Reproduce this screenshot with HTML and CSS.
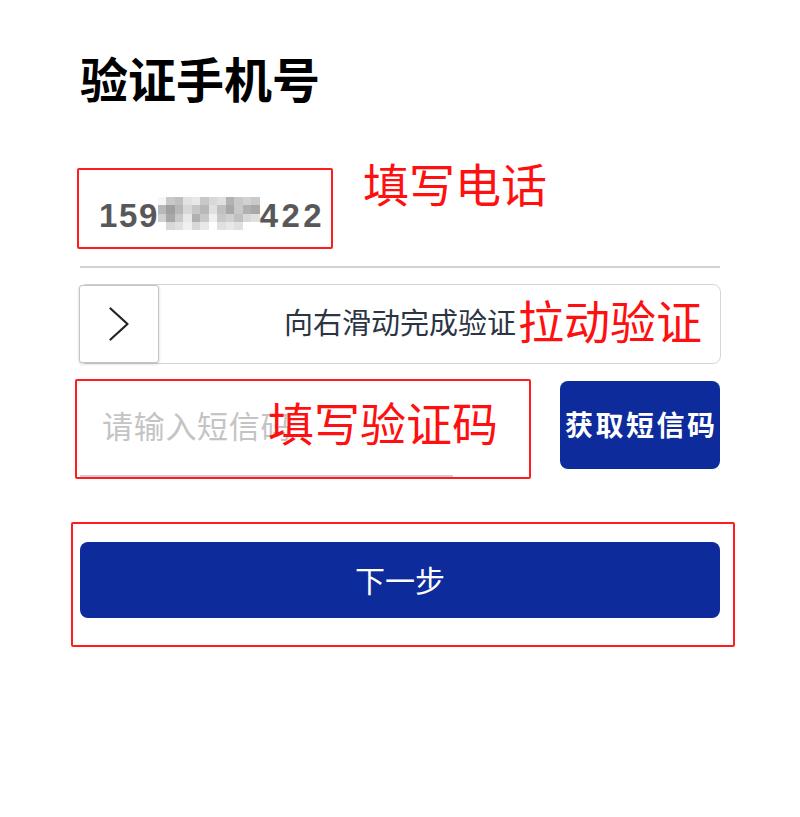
FILE: index.html
```html
<!DOCTYPE html>
<html lang="zh-CN">
<head>
<meta charset="utf-8">
<title>验证手机号</title>
<link rel="stylesheet" href="styles.css">
</head>
<body>
<main class="page">
  <h1 class="title">验证手机号</h1>

  <div class="phone">
    <span class="digits">159</span>
    <div class="mosaic" aria-label="已打码">
      <i style="background:#f6f6f6"></i><i style="background:#c8c8c8"></i><i style="background:#c0c0c0"></i><i style="background:#e2e2e2"></i><i style="background:#e8e8e8"></i><i style="background:#c8c8c8"></i><i style="background:#d8d8d8"></i><i style="background:#e0e0e0"></i><i style="background:#b2b2b2"></i><i style="background:#c8c8c8"></i><i style="background:#d2d2d2"></i><i style="background:#cacaca"></i>
      <i style="background:#b8b8b8"></i><i style="background:#a0a0a0"></i><i style="background:#b8b8b8"></i><i style="background:#d8d8d8"></i><i style="background:#c6c6c6"></i><i style="background:#b8b8b8"></i><i style="background:#e0e0e0"></i><i style="background:#c0c0c0"></i><i style="background:#a8a8a8"></i><i style="background:#c8c8c8"></i><i style="background:#b0b0b0"></i><i style="background:#a8a8a8"></i>
      <i style="background:#d0d0d0"></i><i style="background:#a8a8a8"></i><i style="background:#c8c8c8"></i><i style="background:#e8e8e8"></i><i style="background:#b0b0b0"></i><i style="background:#c8c8c8"></i><i style="background:#f0f0f0"></i><i style="background:#c8c8c8"></i><i style="background:#d0d0d0"></i><i style="background:#c0c0c0"></i><i style="background:#d8d8d8"></i><i style="background:#e0e0e0"></i>
      <i style="background:#fff"></i><i style="background:#d8d8d8"></i><i style="background:#e0e0e0"></i><i style="background:#f0f0f0"></i><i style="background:#d8d8d8"></i><i style="background:#e8e8e8"></i><i style="background:#fff"></i><i style="background:#e0e0e0"></i><i style="background:#e8e8e8"></i><i style="background:#e0e0e0"></i><i style="background:#fff"></i><i style="background:#fff"></i>
    </div>
    <span class="digits digits-tail">422</span>
    <div class="mark mark-phone"></div>
    <div class="note note-phone">填写电话</div>
  </div>

  <div class="slider">
    <div class="handle">
      <svg width="20" height="34" viewBox="0 0 20 34"><polyline points="1.5,1.5 18.5,17 1.5,32.5" fill="none" stroke="#222" stroke-width="2.2" stroke-linecap="round" stroke-linejoin="round"/></svg>
    </div>
    <div class="slider-text">向右滑动完成验证</div>
    <div class="note note-slider">拉动验证</div>
  </div>

  <div class="code-row">
    <div class="code-input"><span class="placeholder">请输入短信码</span></div>
    <button class="btn-sms">获取短信码</button>
    <div class="mark mark-code"></div>
    <div class="note note-code">填写验证码</div>
  </div>

  <div class="next-wrap">
    <button class="btn-next">下一步</button>
    <div class="mark mark-next"></div>
  </div>
</main>
</body>
</html>
```

FILE: styles.css
```css
* { box-sizing: border-box; }
html, body { margin: 0; padding: 0; background: #fff; }
body { font-family: "Noto Sans CJK SC", "Noto Sans", sans-serif; min-height: 817px; }

.page {
  width: 800px;
  padding: 0 80px 60px;
  display: flex;
  flex-direction: column;
}

.title {
  margin: 53px 0 0 0;
  font-size: 48px;
  line-height: 48px;
  font-weight: 700;
  color: #000;
}

.phone {
  position: relative;
  margin-top: 67px;
  height: 100px;
  padding: 32px 0 0 19px;
  display: flex;
  align-items: flex-start;
  border-bottom: 2px solid #d2d2d2;
}
.digits {
  font-family: "Liberation Sans", Arial, sans-serif;
  font-weight: 700;
  font-size: 33px;
  line-height: 32px;
  letter-spacing: 1.6px;
  color: #58585b;
}
.digits-tail { letter-spacing: 3.4px; }
.mosaic {
  margin: -3px 0 0 -1px;
  width: 102px;
  height: 33px;
  display: grid;
  grid-template-columns: repeat(12, 1fr);
  grid-template-rows: repeat(4, 1fr);
}
.mosaic i { display: block; }

.mark {
  position: absolute;
  border: 2px solid #ff1c1c;
  border-radius: 2px;
  pointer-events: none;
}
.note {
  position: absolute;
  font-family: "Noto Sans CJK SC", sans-serif;
  font-size: 46px;
  line-height: 46px;
  font-weight: 400;
  color: #ff1010;
  white-space: nowrap;
}

.mark-phone { left: -3px; top: 0; width: 256px; height: 81px; }
.note-phone { left: 283px; top: -9px; }

.slider {
  position: relative;
  margin: 16px -1px 0 -1px;
  height: 80px;
  border: 1px solid #d6d6d6;
  border-radius: 8px;
  display: grid;
  grid-template-columns: 1fr;
  grid-template-rows: 1fr;
}
.handle {
  grid-area: 1 / 1;
  justify-self: start;
  margin-left: -1px;
  width: 80px;
  height: 78px;
  background: #fff;
  border: 1px solid #c4c4c4;
  border-radius: 3px;
  box-shadow: 0 1px 3px rgba(0,0,0,0.18);
  display: flex;
  align-items: center;
  justify-content: center;
  padding-right: 1px;
}
.handle svg { display: block; }
.slider-text {
  grid-area: 1 / 1;
  justify-self: center;
  align-self: center;
  margin-top: -6px;
  font-size: 29px;
  line-height: 29px;
  color: #2b3544;
}
.note-slider { left: 438px; top: 11px; }

.code-row {
  position: relative;
  margin-top: 17px;
  display: flex;
  justify-content: space-between;
  align-items: flex-start;
}
.code-input {
  width: 373px;
  height: 96px;
  border-bottom: 2px solid #d2d2d2;
  display: flex;
  align-items: center;
  padding: 0 0 7px 22px;
}
.placeholder {
  font-size: 31px;
  line-height: 31px;
  letter-spacing: 0.7px;
  color: #c4c4c4;
}
.btn-sms {
  width: 160px;
  height: 88px;
  border: none;
  border-radius: 8px;
  background: #0d2b9b;
  color: #fff;
  font-family: "Noto Sans CJK SC", sans-serif;
  font-size: 28px;
  font-weight: 700;
  letter-spacing: 2.5px;
  padding: 0 0 3px 2.5px;
  line-height: 28px;
}
.mark-code { left: -5px; top: -2px; width: 456px; height: 100px; }
.note-code { left: 188px; top: 17px; }

.next-wrap {
  position: relative;
  margin: 45px -15px 0 -9px;
  padding: 20px 15px 29px 9px;
}
.btn-next {
  display: block;
  width: 640px;
  height: 76px;
  border: none;
  border-radius: 8px;
  background: #0d2b9b;
  color: #fff;
  font-family: "Noto Sans CJK SC", sans-serif;
  font-size: 30px;
  line-height: 30px;
  font-weight: 400;
  padding: 0 0 3px 0;
}
.mark-next { left: 0; top: 0; right: 0; bottom: 0; }
```
